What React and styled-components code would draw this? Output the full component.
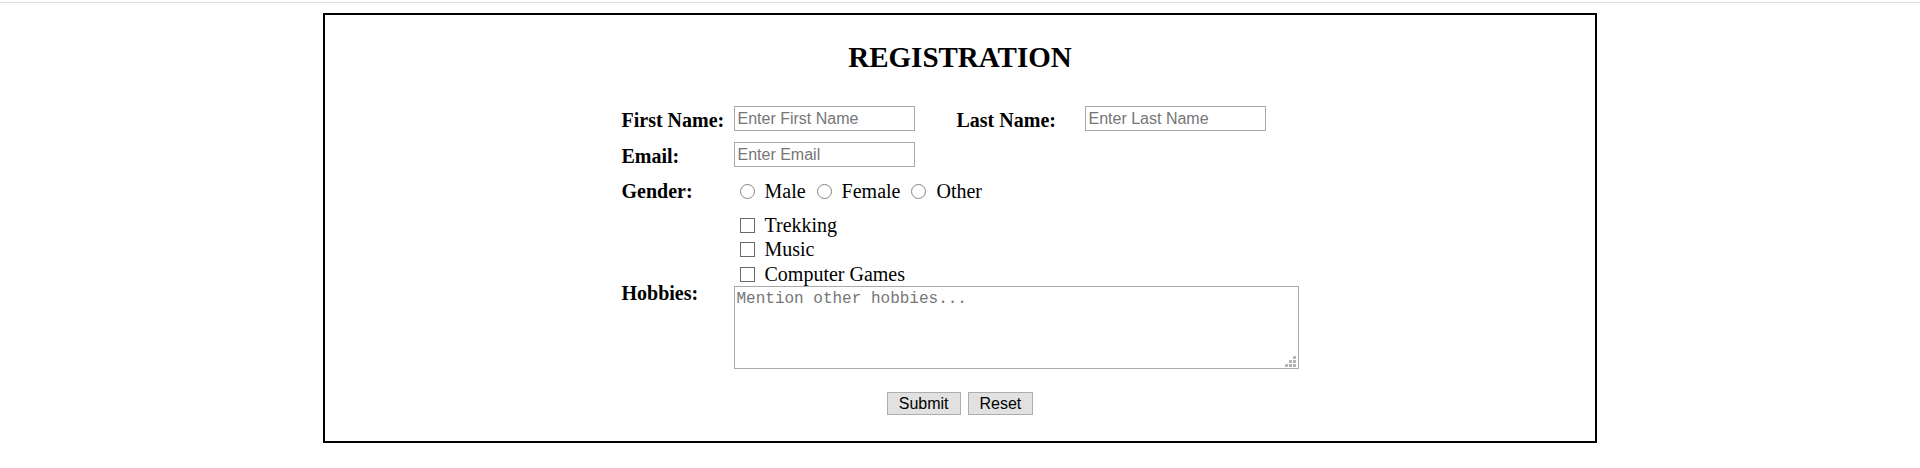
import React from "react";
import styled, { createGlobalStyle } from "styled-components";

const GlobalStyle = createGlobalStyle`
  html, body { margin: 0; padding: 0; background: #fff; }
  body {
    font-family: "Liberation Serif", "Times New Roman", serif;
    color: #000;
  }
  input::placeholder, textarea::placeholder { color: #767676; opacity: 1; }
`;

const TopRule = styled.div`
  margin-top: 2px;
  height: 1px;
  background: #dcdcdc;
`;

const Frame = styled.form`
  box-sizing: border-box;
  width: 1274px;
  height: 430px;
  margin: 10px auto 0;
  border: 2px solid #000;
  padding-top: 26px;
  display: flex;
  flex-direction: column;
  align-items: center;
`;

const Title = styled.h2`
  margin: 0;
  font-size: 29px;
  line-height: 33px;
  font-weight: bold;
`;

const FieldRow = styled.div`
  display: grid;
  grid-template-columns: 112px 223px 128px 214px;
  align-items: ${(p) => p.$align || "center"};
  margin-top: ${(p) => p.$gap}px;
  min-height: ${(p) => p.$height}px;
`;

const Label = styled.label`
  font-size: 20px;
  font-weight: bold;
  padding-top: ${(p) => (p.$lh ? 0 : 3)}px;
  line-height: ${(p) => p.$lh || 22}px;
  white-space: nowrap;
`;

const TextInput = styled.input`
  box-sizing: border-box;
  width: 181px;
  height: 25px;
  margin: 0;
  padding: 1px 3px 0;
  border: 1px solid #a9a9a9;
  border-radius: 0;
  font-family: "Liberation Sans", Arial, sans-serif;
  font-size: 16px;
  outline: none;
`;

const Options = styled.div`
  grid-column: 2 / span 3;
  display: flex;
  align-items: center;
  gap: 11px;
  padding-left: 6px;
`;

const ChoiceList = styled.div`
  grid-column: 2 / span 3;
  display: flex;
  flex-direction: column;
  padding-left: 6px;
`;

const Choice = styled.label`
  display: flex;
  align-items: ${(p) => (p.$h ? "flex-end" : "center")};
  height: ${(p) => p.$h || 23}px;
  font-size: 20px;
  line-height: 23px;
  white-space: nowrap;
`;

const Radio = styled.input.attrs({ type: "radio" })`
  appearance: none;
  box-sizing: border-box;
  width: 15px;
  height: 15px;
  margin: 0 10px 0 0;
  border: 1px solid #858585;
  border-radius: 50%;
  background: #fff;
`;

const Check = styled.input.attrs({ type: "checkbox" })`
  appearance: none;
  box-sizing: border-box;
  width: 15px;
  height: 15px;
  margin: 0 10px 4px 0;
  border: 1px solid #6a6a6a;
  border-radius: 0;
  background: #fff;
`;

const AreaWrap = styled.div`
  grid-column: 2 / span 3;
  position: relative;
  height: 83px;
`;

const Area = styled.textarea`
  box-sizing: border-box;
  display: block;
  width: 565px;
  height: 83px;
  margin: 0;
  padding: 3px 2px;
  border: 1px solid #a9a9a9;
  border-radius: 0;
  resize: none;
  font-family: "Liberation Mono", "Courier New", monospace;
  font-size: 16px;
  outline: none;
`;

const Grip = styled.svg`
  position: absolute;
  right: 3px;
  bottom: 2px;
  width: 11px;
  height: 11px;
`;

const Actions = styled.div`
  grid-column: 1 / -1;
  display: flex;
  justify-content: center;
  gap: 7px;
`;

const Button = styled.button`
  box-sizing: border-box;
  height: 23px;
  margin: 0;
  padding: 0 11px;
  border: 1px solid #adadad;
  border-radius: 0;
  background: #e1e1e1;
  color: #000;
  font-family: "Liberation Sans", Arial, sans-serif;
  font-size: 16px;
  line-height: 21px;
`;

const ResizeGrip = () => (
  <Grip viewBox="0 0 11 11">
    {[
      [8, 0],
      [4, 4],
      [8, 4],
      [0, 8],
      [4, 8],
      [8, 8],
    ].map(([x, y]) => (
      <rect key={`${x}-${y}`} x={x} y={y} width="3" height="3" fill="#b4b4b4" />
    ))}
  </Grip>
);

const hobbies = [
  { name: "Trekking", h: 23 },
  { name: "Music", h: 24 },
  { name: "Computer Games", h: 25 },
];

export default function App() {
  return (
    <>
      <GlobalStyle />
      <TopRule />
      <Frame onSubmit={(e) => e.preventDefault()}>
        <Title>REGISTRATION</Title>
        <FieldRow $gap={32} $height={25}>
          <Label>First Name:</Label>
          <TextInput placeholder="Enter First Name" />
          <Label>Last Name:</Label>
          <TextInput placeholder="Enter Last Name" />
        </FieldRow>
        <FieldRow $gap={11} $height={25}>
          <Label>Email:</Label>
          <TextInput placeholder="Enter Email" />
        </FieldRow>
        <FieldRow $gap={13} $height={23}>
          <Label $lh={23}>Gender:</Label>
          <Options>
            <Choice>
              <Radio name="gender" />
              Male
            </Choice>
            <Choice>
              <Radio name="gender" />
              Female
            </Choice>
            <Choice>
              <Radio name="gender" />
              Other
            </Choice>
          </Options>
        </FieldRow>
        <FieldRow $gap={11} $height={72}>
          <span />
          <ChoiceList>
            {hobbies.map((h) => (
              <Choice key={h.name} $h={h.h}>
                <Check />
                {h.name}
              </Choice>
            ))}
          </ChoiceList>
        </FieldRow>
        <FieldRow $gap={0} $height={83} $align="start">
          <Label $lh={14}>Hobbies:</Label>
          <AreaWrap>
            <Area placeholder="Mention other hobbies..." />
            <ResizeGrip />
          </AreaWrap>
        </FieldRow>
        <FieldRow $gap={23} $height={23}>
          <Actions>
            <Button type="submit">Submit</Button>
            <Button type="reset">Reset</Button>
          </Actions>
        </FieldRow>
      </Frame>
    </>
  );
}
